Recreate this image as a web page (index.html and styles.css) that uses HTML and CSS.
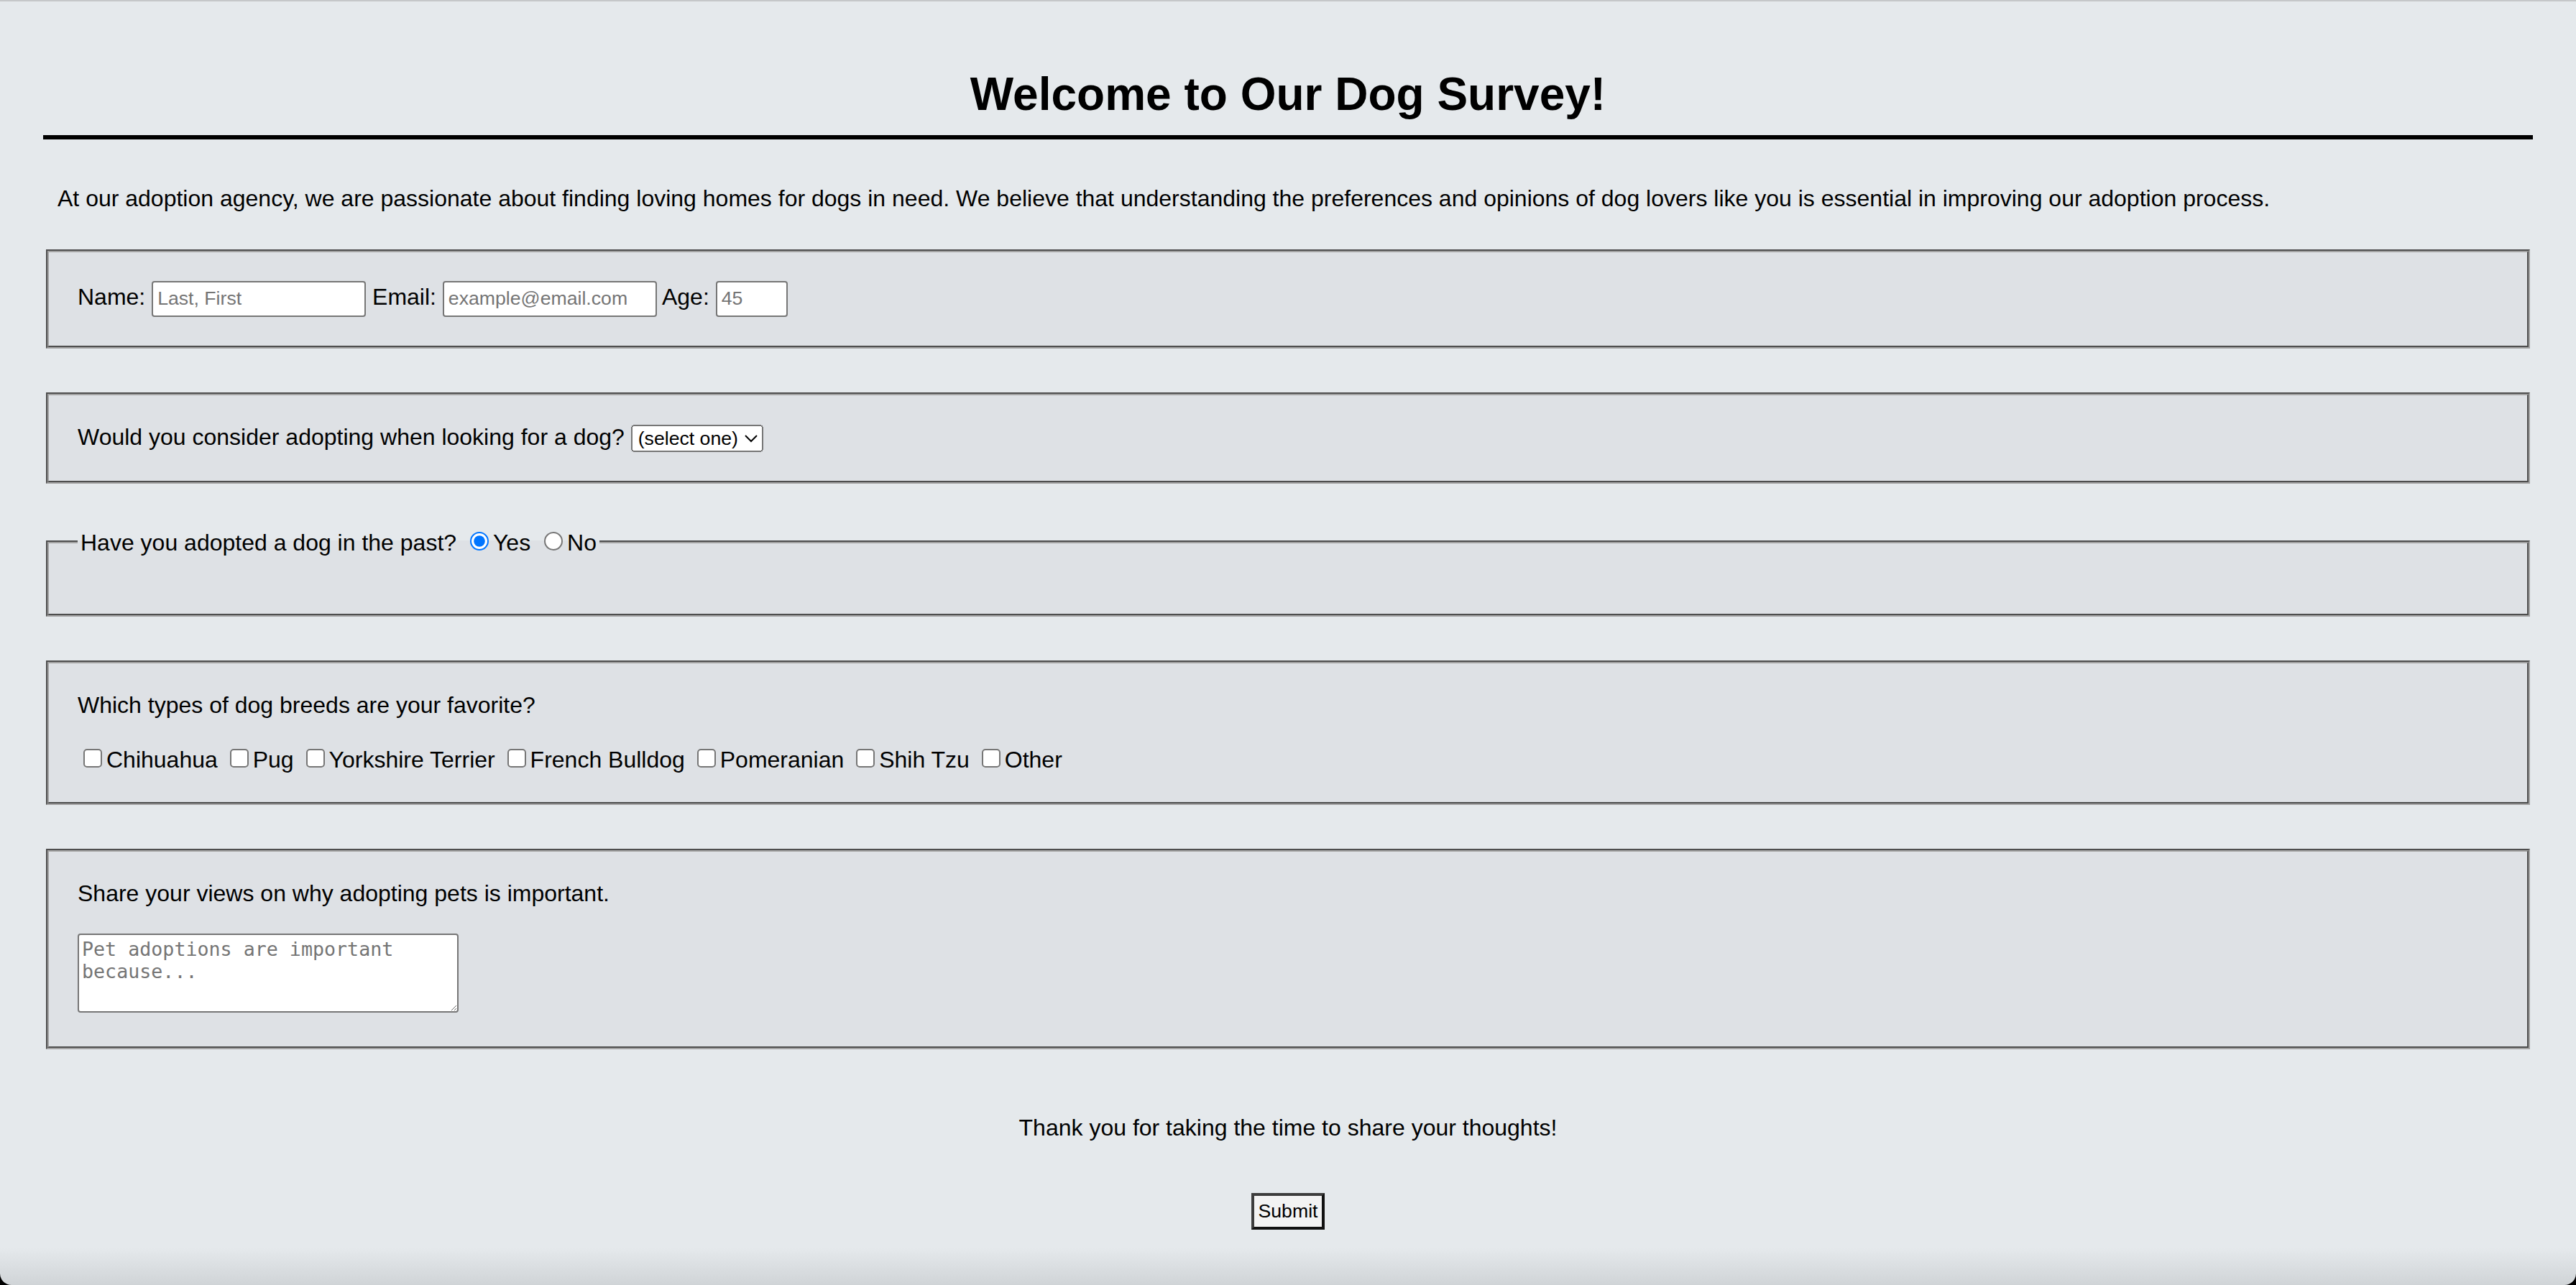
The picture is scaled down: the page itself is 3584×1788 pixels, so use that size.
FILE: index.html
```html
<!DOCTYPE html>
<html lang="en">
<head>
<meta charset="utf-8">
<title>Dog Survey</title>
<link rel="stylesheet" href="styles.css">
</head>
<body>
<div class="page">
  <h1 class="title">Welcome to Our Dog Survey!</h1>
  <hr class="rule">
  <p class="intro">At our adoption agency, we are passionate about finding loving homes for dogs in need. We believe that understanding the preferences and opinions of dog lovers like you is essential in improving our adoption process.</p>
  <form class="survey">
    <fieldset class="group">
      <div class="line"><label>Name: <input class="field field-wide" type="text" placeholder="Last, First"></label> <label>Email: <input class="field field-wide" type="email" placeholder="example@email.com"></label> <label>Age: <input class="field field-age" type="text" placeholder="45"></label></div>
    </fieldset>
    <fieldset class="group">
      <div class="line"><label>Would you consider adopting when looking for a dog? <select class="choice"><option>(select one)</option><option>Yes</option><option>No</option><option>Maybe</option></select></label></div>
    </fieldset>
    <fieldset class="group">
      <legend class="legend">Have you adopted a dog in the past? <input type="radio" name="past" checked>Yes <input type="radio" name="past">No</legend>
    </fieldset>
    <fieldset class="group">
      <div class="question">Which types of dog breeds are your favorite?</div>
      <div class="options"><label><input type="checkbox">Chihuahua</label> <label><input type="checkbox">Pug</label> <label><input type="checkbox">Yorkshire Terrier</label> <label><input type="checkbox">French Bulldog</label> <label><input type="checkbox">Pomeranian</label> <label><input type="checkbox">Shih Tzu</label> <label><input type="checkbox">Other</label></div>
    </fieldset>
    <fieldset class="group">
      <div class="question">Share your views on why adopting pets is important.</div>
      <div class="options options-text"><textarea class="views" cols="30" rows="3" placeholder="Pet adoptions are important because..."></textarea></div>
    </fieldset>
    <p class="thanks">Thank you for taking the time to share your thoughts!</p>
    <div class="actions"><button class="submit" type="submit">Submit</button></div>
  </form>
</div>
</body>
</html>
```
FILE: styles.css
```css
html {
  zoom: 2;
  background: #000;
}

body {
  margin: 0;
  min-height: 894px;
  box-sizing: border-box;
  border-top: 1px solid #c5c7c9;
  border-radius: 0 0 8px 8px;
  background: linear-gradient(to bottom, #e5e9ec 0, #e5e9ec calc(100% - 26px), #d0d4d7 100%);
  font-family: "Liberation Sans", Arial, sans-serif;
  font-size: 16px;
  color: #000;
}

.page {
  padding: 0 30px;
  display: flex;
  flex-direction: column;
}

.title {
  margin: 46px 0 0;
  font-size: 32px;
  line-height: 37px;
  font-weight: bold;
  text-align: center;
}

.rule {
  margin: 10px 0 0;
  height: 3px;
  border: 0;
  background: #000;
}

.intro {
  margin: 32px 0 0;
  padding-left: 10px;
  line-height: 18.4px;
}

.survey {
  display: flex;
  flex-direction: column;
  margin-top: 26px;
}

.group {
  margin: 0 2px 30.5px;
  padding: 20px;
  border: 2px groove #a2a2a2;
  background: #dee1e5;
  min-width: 0;
}

.line {
  line-height: 18px;
}

.field {
  box-sizing: border-box;
  height: 25px;
  padding: 1px 3px;
  font-family: "Liberation Sans", Arial, sans-serif;
  font-size: 13.33px;
  vertical-align: middle;
  border: 1px solid #767676;
  border-radius: 2px;
  background: #fff;
}

.field::placeholder,
.views::placeholder {
  color: #757575;
}

.field-wide {
  width: 149px;
}

.field-age {
  width: 50px;
}

.choice {
  font-family: "Liberation Sans", Arial, sans-serif;
  font-size: 13.33px;
  height: 19px;
  vertical-align: baseline;
}

.legend {
  padding: 0 2px;
}

.question {
  line-height: 18.4px;
}

.options {
  margin-top: 18.4px;
  line-height: 18.4px;
}

.options-text {
  padding-bottom: 3.5px;
}

.views {
  box-sizing: border-box;
  width: 265px;
  height: 55px;
  font-family: "DejaVu Sans Mono", "Liberation Mono", monospace;
  font-size: 13.33px;
  vertical-align: bottom;
  border: 1px solid #767676;
  border-radius: 2px;
  background: #fff;
}

.thanks {
  margin: 15px 0 0;
  text-align: center;
  line-height: 18.4px;
}

.actions {
  margin-top: 36px;
  display: flex;
  justify-content: center;
}

.submit {
  box-sizing: border-box;
  width: 51px;
  height: 25.5px;
  padding: 0;
  font-family: "Liberation Sans", Arial, sans-serif;
  font-size: 13.33px;
  color: #000;
  background: #f3f3f3;
  border: 2px solid #111;
  border-top-color: #3d3d3d;
  border-left-color: #3d3d3d;
}
```
